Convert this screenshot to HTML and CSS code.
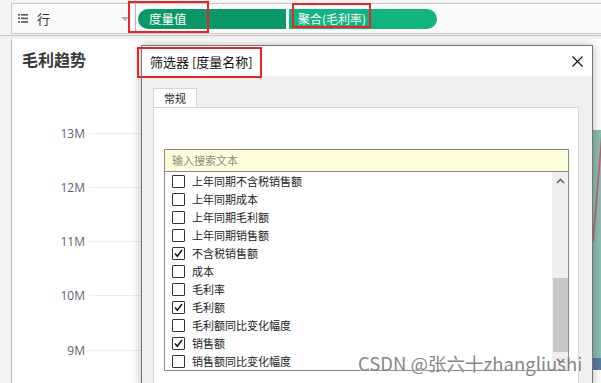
FILE: index.html
```html
<!DOCTYPE html>
<html lang="zh-CN">
<head>
  <meta charset="UTF-8" />
  <title>筛选器 [度量名称]</title>
  <link rel="stylesheet" href="styles.css">
</head>
<body>
  <div class="topbar">
    <div class="shelf">
      <div class="shelf-label">
        <svg class="shelf-icon" width="10" height="9" viewBox="0 0 10 9">
          <rect x="0" y="0" width="2" height="1.6" fill="#555"/>
          <rect x="3" y="0" width="7" height="1.6" fill="#555"/>
          <rect x="0" y="3.6" width="2" height="1.6" fill="#555"/>
          <rect x="3" y="3.6" width="7" height="1.6" fill="#555"/>
          <rect x="0" y="7.2" width="2" height="1.6" fill="#555"/>
          <rect x="3" y="7.2" width="7" height="1.6" fill="#555"/>
        </svg>
        <span>行</span>
        <span class="shelf-caret"></span>
      </div>
      <div class="pills">
        <div class="pill pill-dim">度量值</div>
        <div class="pill pill-agg">聚合(毛利率)</div>
      </div>
    </div>
    <div class="mark mark-1"></div>
    <div class="mark mark-2"></div>
  </div>

  <div class="main">
    <div class="side"></div>
    <div class="chart">
      <h2 class="chart-title">毛利趋势</h2>
      <div class="ticks">
        <div class="tick"><span>13M</span><i></i></div>
        <div class="tick"><span>12M</span><i></i></div>
        <div class="tick"><span>11M</span><i></i></div>
        <div class="tick"><span>10M</span><i></i></div>
        <div class="tick"><span>9M</span><i></i></div>
        <div class="area">
          <svg width="8" height="228" viewBox="0 0 8 228">
            <line x1="9" y1="4" x2="0" y2="112" stroke="#c0646a" stroke-width="1.6"/>
          </svg>
          <div class="area-foot"></div>
        </div>
      </div>

      <div class="dialog">
        <div class="dialog-head">
          <span class="dialog-title">筛选器 [度量名称]</span>
          <svg class="dialog-close" width="11" height="11" viewBox="0 0 11 11">
            <path d="M0.5 0.5 L10.5 10.5 M10.5 0.5 L0.5 10.5" stroke="#111" stroke-width="1.1"/>
          </svg>
          <div class="mark mark-3"></div>
        </div>
        <div class="dialog-body">
          <div class="tabs"><div class="tab">常规</div></div>
          <div class="tab-panel">
            <div class="search">输入搜索文本</div>
            <div class="list">
              <ul class="items" id="items"></ul>
              <div class="scroll">
                <svg class="scroll-up" width="9" height="6" viewBox="0 0 9 6"><path d="M1 5 L4.5 1.5 L8 5" stroke="#666" stroke-width="1.6" fill="none"/></svg>
                <div class="scroll-thumb"></div>
                <svg class="scroll-down" width="9" height="6" viewBox="0 0 9 6"><path d="M1 1 L4.5 4.5 L8 1" stroke="#666" stroke-width="1.6" fill="none"/></svg>
              </div>
            </div>
          </div>
        </div>
      </div>

      <div class="watermark">CSDN @张六十zhangliushi</div>
    </div>
  </div>

  <script>
    const campos = [
      { nome: "上年同期不含税销售额", marcado: false },
      { nome: "上年同期成本", marcado: false },
      { nome: "上年同期毛利额", marcado: false },
      { nome: "上年同期销售额", marcado: false },
      { nome: "不含税销售额", marcado: true },
      { nome: "成本", marcado: false },
      { nome: "毛利率", marcado: false },
      { nome: "毛利额", marcado: true },
      { nome: "毛利额同比变化幅度", marcado: false },
      { nome: "销售额", marcado: true },
      { nome: "销售额同比变化幅度", marcado: false }
    ];

    const ul = document.getElementById("items");
    campos.forEach(c => {
      const check = c.marcado
        ? `<svg width="11" height="11" viewBox="0 0 11 11"><path d="M2 5.5 L4.3 8.3 L9 2" stroke="#111" stroke-width="1.5" fill="none"/></svg>`
        : "";
      ul.innerHTML += `<li><span class="box">${check}</span>${c.nome}</li>`;
    });
  </script>
</body>
</html>
```

FILE: styles.css
```css
body {
  margin: 0;
  width: 601px;
  height: 383px;
  overflow: hidden;
  background: #f0f0f0;
  font-family: "Noto Sans CJK SC", "Noto Sans", sans-serif;
  color: #222;
  display: flex;
  flex-direction: column;
}

.topbar {
  height: 36px;
  flex-shrink: 0;
  background: #f4f4f4;
  border-bottom: 1px solid #c4c4c4;
  padding-top: 3px;
  box-sizing: border-box;
  position: relative;
}

.shelf {
  margin-left: 11px;
  height: 31px;
  border: 1px solid #c8c8c8;
  border-right: none;
  background: #fafafa;
  box-sizing: border-box;
  display: flex;
  align-items: center;
}

.shelf-label {
  width: 124px;
  height: 100%;
  border-right: 1px solid #b8b8b8;
  display: flex;
  align-items: center;
  padding-left: 6px;
  box-sizing: border-box;
  font-size: 13px;
  color: #333;
  position: relative;
}

.shelf-icon {
  margin-right: 9px;
}

.shelf-caret {
  position: absolute;
  right: 6px;
  top: 13px;
  border-left: 4px solid transparent;
  border-right: 4px solid transparent;
  border-top: 4px solid #aaa;
}

.pills {
  display: flex;
  gap: 3px;
  margin-left: 2px;
}

.pill {
  height: 20px;
  width: 148px;
  font-size: 12px;
  line-height: 20px;
  color: #fff;
  box-sizing: border-box;
  white-space: nowrap;
}

.pill-dim {
  background: #0b9768;
  border-radius: 10px 0 0 10px;
  padding-left: 11px;
  font-size: 12.5px;
}

.pill-agg {
  background: #11b37e;
  border-radius: 0 10px 10px 0;
  padding-left: 9px;
}

.mark {
  position: absolute;
  border: 2px solid #e8232a;
  box-sizing: border-box;
}

.mark-1 {
  left: 128px;
  top: 1px;
  width: 81px;
  height: 32px;
}

.mark-2 {
  left: 292px;
  top: 3px;
  width: 79px;
  height: 25px;
}

.main {
  flex: 1;
  display: flex;
  margin-top: 3px;
  min-height: 0;
}

.side {
  width: 11px;
  flex-shrink: 0;
  background: #f4f4f4;
  border-right: 1px solid #bdbdbd;
}

.chart {
  flex: 1;
  background: #fff;
  position: relative;
  padding-top: 10px;
  overflow: hidden;
}

.chart-title {
  margin: 0 0 0 10px;
  font-size: 16px;
  line-height: 20px;
  font-weight: bold;
  color: #3a3a3a;
}

.ticks {
  margin-top: 37px;
  position: relative;
}

.tick {
  height: 54.25px;
  display: flex;
  align-items: center;
}

.tick span {
  width: 73px;
  text-align: right;
  font-family: "Open Sans", "Noto Sans", sans-serif;
  font-size: 12px;
  color: #5f6470;
}

.tick i {
  flex: 1;
  height: 1px;
  margin-left: 4px;
  background: #ececec;
}

.area {
  position: absolute;
  right: 0;
  top: 24px;
  width: 8px;
  height: 240px;
  background: #8dbdb3;
  display: flex;
  flex-direction: column;
  justify-content: space-between;
}

.area-foot {
  height: 12px;
  background: #5a7ba3;
}

.dialog {
  position: absolute;
  left: 129px;
  top: 6px;
  width: 452px;
  height: 343px;
  border: 1px solid #777;
  border-bottom: none;
  background: #f0f0f0;
  box-shadow: 0 0 10px rgba(0, 0, 0, 0.28);
  box-sizing: border-box;
}

.dialog-head {
  height: 30px;
  background: #fff;
  display: flex;
  align-items: center;
  justify-content: space-between;
  padding: 0 9px 0 8px;
  position: relative;
}

.dialog-title {
  font-size: 13px;
  color: #111;
}

.mark-3 {
  left: -5px;
  top: 1px;
  width: 125px;
  height: 31px;
}

.dialog-body {
  padding: 12px 13px 0 11px;
}

.tabs {
  display: flex;
}

.tab {
  width: 44px;
  height: 19px;
  background: #fff;
  border: 1px solid #d6d6d6;
  border-bottom: none;
  box-sizing: border-box;
  font-size: 11px;
  line-height: 18px;
  text-align: center;
  color: #222;
}

.tab-panel {
  background: #fff;
  border: 1px solid #d6d6d6;
  border-bottom: none;
  height: 281px;
  padding: 41px 9px 0 10px;
  box-sizing: border-box;
}

.search {
  height: 23px;
  background: #fffedb;
  border: 1px solid #8a8a8a;
  box-sizing: border-box;
  font-size: 11px;
  line-height: 21px;
  padding-left: 7px;
  color: #8a8a8a;
}

.list {
  height: 199px;
  border: 1px solid #8a8a8a;
  border-top: none;
  box-sizing: border-box;
  display: flex;
}

.items {
  flex: 1;
  list-style: none;
  margin: 0;
  padding: 0 0 0 7px;
}

.items li {
  height: 18px;
  display: flex;
  align-items: center;
  font-size: 11px;
  color: #222;
}

.box {
  width: 13px;
  height: 13px;
  border: 1px solid #333;
  border-radius: 1px;
  box-sizing: border-box;
  margin-right: 7px;
  display: flex;
  align-items: center;
  justify-content: center;
}

.scroll {
  width: 16px;
  background: #efefef;
  display: flex;
  flex-direction: column;
  align-items: center;
}

.scroll-up {
  margin-top: 6px;
}

.scroll-thumb {
  width: 15px;
  height: 74px;
  margin-top: 94px;
  background: #c8c8c8;
}

.scroll-down {
  margin-top: 6px;
}

.watermark {
  position: absolute;
  left: 346px;
  top: 311px;
  font-size: 18.5px;
  color: rgba(110, 110, 110, 0.85);
  text-shadow: 0 0 2px #fff;
  white-space: nowrap;
}
```
